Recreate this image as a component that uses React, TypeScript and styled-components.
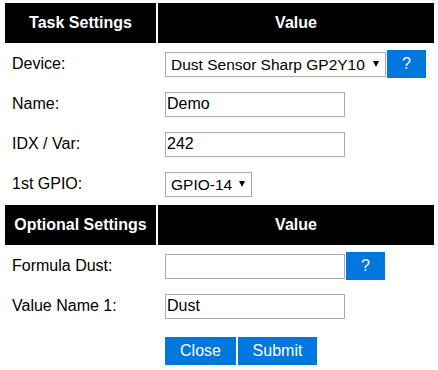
import React from "react";
import styled, { createGlobalStyle } from "styled-components";

const Global = createGlobalStyle`
  html, body { margin: 0; padding: 0; background: #fff; }
  body { font-family: "Liberation Sans", Arial, sans-serif; font-size: 16px; color: #000; }
`;

const Page = styled.div`
  padding: 1px 0 0 3px;
`;

const Table = styled.table`
  border-collapse: separate;
  border-spacing: 2px;
  width: 433px;
  table-layout: fixed;
`;

const HeadCell = styled.th<{ $w?: number }>`
  background: #000;
  color: #fff;
  font-weight: bold;
  font-size: 16px;
  height: 40px;
  padding: 0;
  text-align: center;
  ${(p) => (p.$w ? `width: ${p.$w}px;` : "")}
`;

const Row = styled.tr<{ $h?: number }>`
  height: ${(p) => p.$h ?? 38}px;
`;

const Label = styled.td`
  padding: 0 7px;
  font-size: 16px;
  vertical-align: middle;
`;

const ValueCell = styled.td<{ $top?: boolean }>`
  padding: ${(p) => (p.$top ? "10px 7px 0" : "0 7px")};
  vertical-align: ${(p) => (p.$top ? "top" : "middle")};
`;

const Inline = styled.div<{ $gap?: number }>`
  display: flex;
  align-items: center;
  gap: ${(p) => p.$gap ?? 1}px;
`;

const TextInput = styled.input`
  box-sizing: border-box;
  width: 180px;
  height: 25px;
  border: 1px solid #aaa;
  padding: 0 1px;
  margin: 0;
  font-family: "Liberation Sans", Arial, sans-serif;
  font-size: 16px;
  color: #000;
  background: #fff;
  outline: none;
`;

const SelectWrap = styled.span`
  position: relative;
  display: inline-block;
`;

const Select = styled.select<{ $w: number }>`
  appearance: none;
  -webkit-appearance: none;
  box-sizing: border-box;
  width: ${(p) => p.$w}px;
  height: 25px;
  border: 1px solid #aaa;
  border-radius: 0;
  padding: 0 0 0 5px;
  margin: 0;
  font-family: "Liberation Sans", Arial, sans-serif;
  font-size: 15.5px;
  color: #000;
  background: #fff;
  outline: none;
  display: block;
`;

const Arrow = styled.span`
  position: absolute;
  right: 7px;
  top: 9px;
  width: 0;
  height: 0;
  border-left: 3px solid transparent;
  border-right: 3px solid transparent;
  border-top: 6px solid #000;
  pointer-events: none;
`;

const Button = styled.button<{ $w: number }>`
  box-sizing: border-box;
  width: ${(p) => p.$w}px;
  height: 28px;
  border: none;
  border-radius: 0;
  margin: 0;
  padding: 0;
  background: #0077dd;
  color: #fff;
  font-family: "Liberation Sans", Arial, sans-serif;
  font-size: 16px;
  cursor: pointer;
`;

export default function App() {
  return (
    <Page>
      <Global />
      <Table>
        <thead>
          <tr>
            <HeadCell $w={151}>Task Settings</HeadCell>
            <HeadCell>Value</HeadCell>
          </tr>
        </thead>
        <tbody>
          <Row>
            <Label>Device:</Label>
            <ValueCell>
              <Inline>
                <SelectWrap>
                  <Select $w={221} defaultValue="dust">
                    <option value="dust">Dust Sensor Sharp GP2Y10</option>
                  </Select>
                  <Arrow />
                </SelectWrap>
                <Button $w={39}>?</Button>
              </Inline>
            </ValueCell>
          </Row>
          <Row>
            <Label>Name:</Label>
            <ValueCell>
              <TextInput defaultValue="Demo" />
            </ValueCell>
          </Row>
          <Row>
            <Label>IDX / Var:</Label>
            <ValueCell>
              <TextInput defaultValue="242" />
            </ValueCell>
          </Row>
          <Row>
            <Label>1st GPIO:</Label>
            <ValueCell>
              <SelectWrap>
                <Select $w={87} defaultValue="14">
                  <option value="14">GPIO-14</option>
                </Select>
                <Arrow />
              </SelectWrap>
            </ValueCell>
          </Row>
          <tr>
            <HeadCell>Optional Settings</HeadCell>
            <HeadCell>Value</HeadCell>
          </tr>
          <Row>
            <Label>Formula Dust:</Label>
            <ValueCell>
              <Inline>
                <TextInput defaultValue="" />
                <Button $w={39}>?</Button>
              </Inline>
            </ValueCell>
          </Row>
          <Row>
            <Label>Value Name 1:</Label>
            <ValueCell>
              <TextInput defaultValue="Dust" />
            </ValueCell>
          </Row>
          <Row $h={45}>
            <Label />
            <ValueCell $top>
              <Inline $gap={2}>
                <Button $w={71}>Close</Button>
                <Button $w={79}>Submit</Button>
              </Inline>
            </ValueCell>
          </Row>
        </tbody>
      </Table>
    </Page>
  );
}
